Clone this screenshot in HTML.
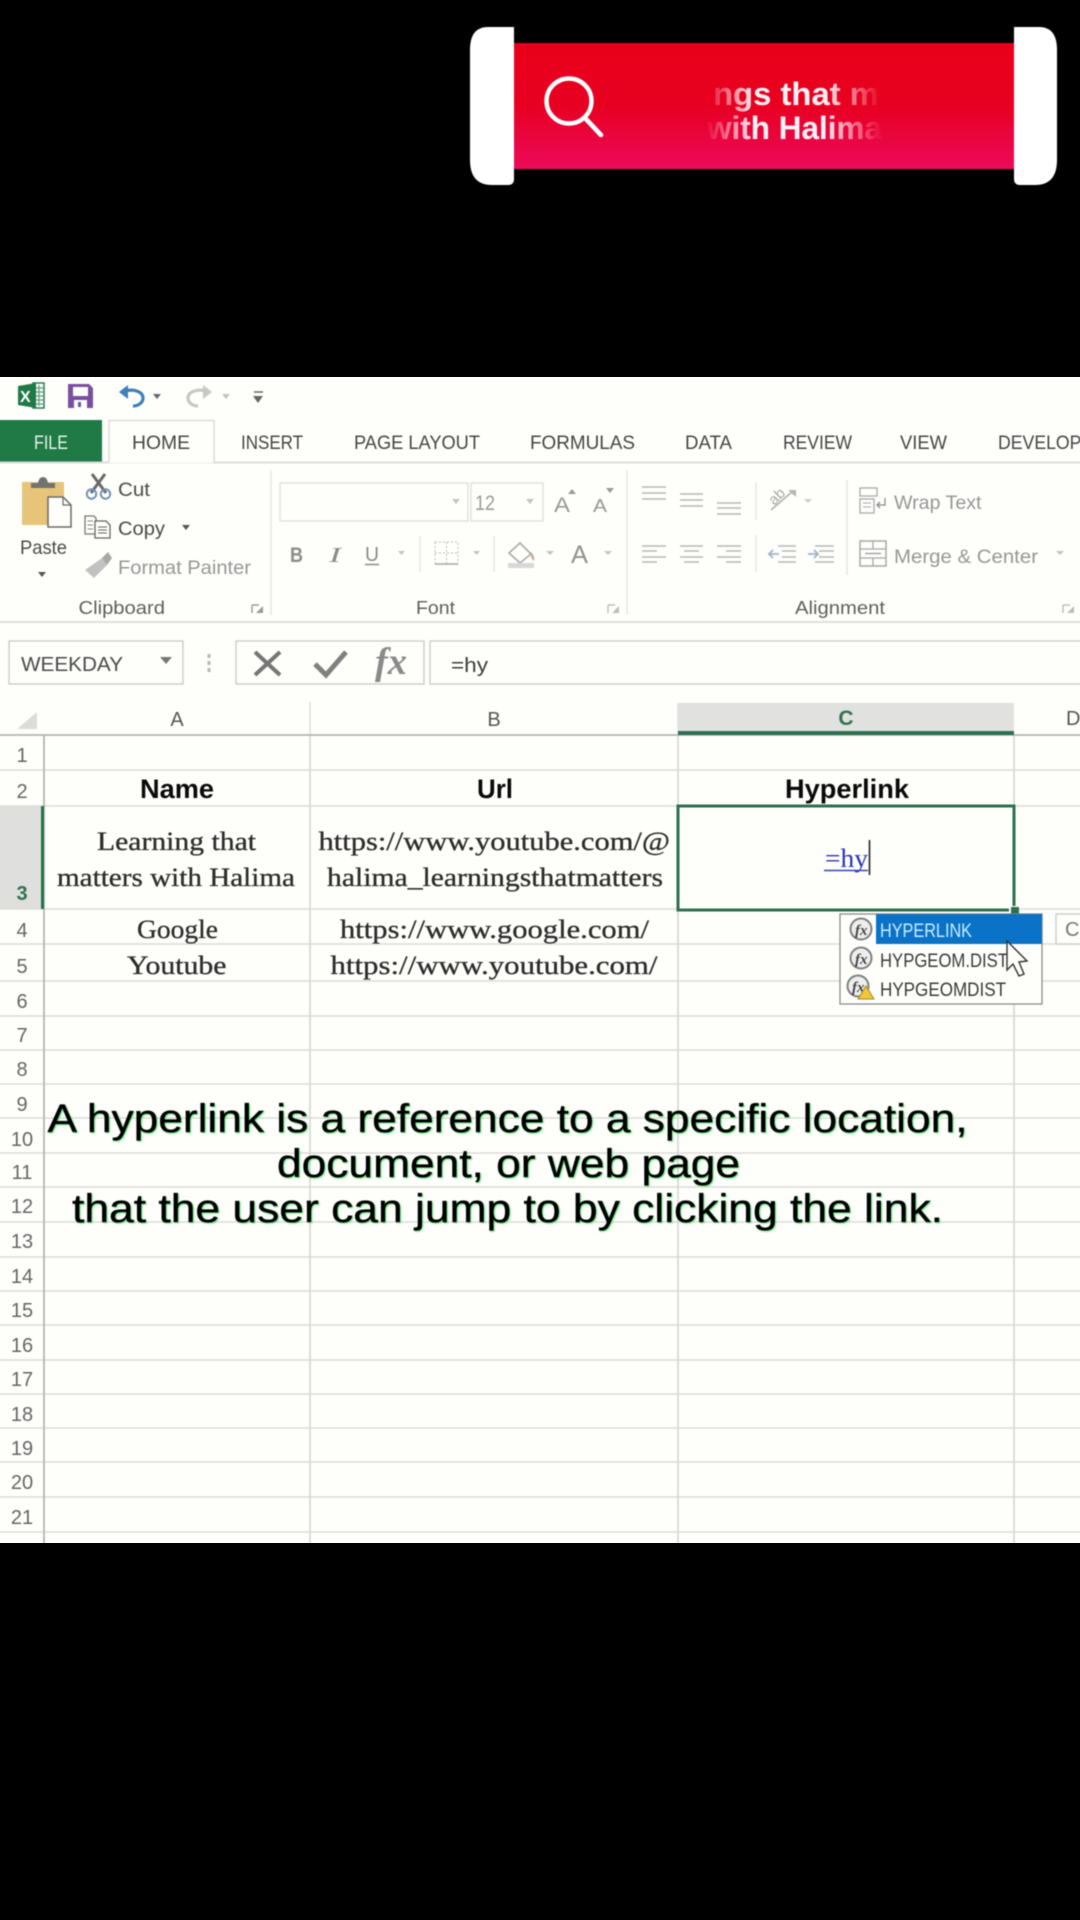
<!DOCTYPE html>
<html lang="en">
<head>
<meta charset="utf-8">
<title>Excel hyperlink</title>
<style>
html,body{margin:0;padding:0;background:#000;width:1080px;height:1920px;overflow:hidden}
svg{display:block;position:absolute;left:0;top:0}
text{font-family:"Liberation Sans",sans-serif}
.blur{filter:blur(.55px)}
.tab{font-size:19.5px;fill:#454545}
.rib{font-size:19.5px;fill:#4a4a4a}
.dim{font-size:19.5px;fill:#979797}
.grp{font-size:18px;fill:#5f5f5f}
.rn{font-size:20px;fill:#666;text-anchor:middle}
.hd{font-size:20px;fill:#555;text-anchor:middle}
.bd{font-size:27px;font-weight:bold;fill:#0a0a0a}
.sf{font-family:"Liberation Serif",serif;font-size:26px;fill:#2c2c2c;stroke:#2c2c2c;stroke-width:.3px}
.pop{font-size:19px;fill:#3a3a3a}
.sub{font-size:40px;fill:#000;stroke:#000;stroke-width:.35px;filter:drop-shadow(1.5px 1.5px .7px #52e56f)}
</style>
</head>
<body>
<svg width="1080" height="1920" viewBox="0 0 1080 1920" xmlns="http://www.w3.org/2000/svg">
<defs>
<linearGradient id="red" x1="0" y1="0" x2="0" y2="1">
<stop offset="0" stop-color="#e8001a"/><stop offset=".5" stop-color="#e80022"/><stop offset="1" stop-color="#ec0a5c"/>
</linearGradient>
<linearGradient id="fade" gradientUnits="userSpaceOnUse" x1="706" y1="0" x2="882" y2="0">
<stop offset="0" stop-color="#fff" stop-opacity="0"/>
<stop offset=".27" stop-color="#fff" stop-opacity=".95"/>
<stop offset=".68" stop-color="#fff" stop-opacity=".95"/>
<stop offset=".98" stop-color="#fff" stop-opacity=".05"/>
</linearGradient>
<clipPath id="r"><rect x="0" y="377" width="1080" height="1166"/></clipPath>
</defs>

<!-- Banner -->
<g class="blur">
<rect x="514" y="43" width="500" height="126" fill="url(#red)"/>
<path d="M514 27H488Q470 27 470 50V160Q470 185 492 185H508Q514 185 514 179Z" fill="#fff"/>
<path d="M1014 27H1039Q1057 27 1057 50V160Q1057 185 1035 185H1020Q1014 185 1014 179Z" fill="#fff"/>
<circle cx="569" cy="101" r="22.500" fill="none" stroke="#fff" stroke-width="4.400"/>
<path d="M585 118L601 135" stroke="#fff" stroke-width="4.600" stroke-linecap="round"/>
<text x="713" y="105" font-size="32" font-weight="bold" fill="url(#fade)" textLength="166" lengthAdjust="spacingAndGlyphs">ngs that m</text>
<text x="707" y="139" font-size="32" font-weight="bold" fill="url(#fade)" textLength="175" lengthAdjust="spacingAndGlyphs">with Halima</text>
</g>

<g clip-path="url(#r)"><g class="blur">
<rect x="-20" y="360" width="1120" height="1200" fill="#fefefb"/>

<!-- Quick access -->
<path d="M33 383H44V408H33Z" fill="#fff" stroke="#2a7a4e" stroke-width="1.5"/>
<path d="M35 388H43M35 392H43M35 396H43M35 400H43M35 404H43M39 385V406" stroke="#6fa88a" stroke-width="1.4"/>
<path d="M18 386L36 383V408L18 405Z" fill="#1f7a48"/>
<text x="20" y="402" font-size="16" font-weight="bold" fill="#fff">X</text>
<path d="M68 384H89L93 388V408H68Z" fill="#7a4f9f"/>
<rect x="73" y="387" width="15" height="9" fill="#fefefb"/>
<rect x="74" y="400" width="13" height="8" fill="#fefefb"/>
<rect x="78" y="402" width="3" height="5" fill="#7a4f9f"/>
<path d="M123 392C132 388 143 391 143 398C143 403 138 406 133 406" fill="none" stroke="#3d7fb8" stroke-width="3.2"/>
<path d="M119 392L128 385V399Z" fill="#3d7fb8"/>
<path d="M208 392C199 388 188 391 188 398C188 403 193 406 198 406" fill="none" stroke="#c8c8c8" stroke-width="3.2"/>
<path d="M212 392L203 385V399Z" fill="#c8c8c8"/>
<path d="M153 394H161L157 399Z" fill="#666"/>
<path d="M222 394H230L226 399Z" fill="#c4c4c4"/>
<path d="M254 392H263" stroke="#666" stroke-width="1.5"/><path d="M253 396H263L258 403Z" fill="#666"/>

<!-- Tabs -->
<rect x="-20" y="420" width="122" height="43" fill="#1f7a45"/>
<path d="M-20 462.500H1100" stroke="#dcdcda" stroke-width="2"/>
<path d="M109 463V420.500H214V463" fill="#fefefb" stroke="#dcdcda" stroke-width="1.5"/>
<text x="34" y="449" font-size="19.5" fill="#e8f4ec" textLength="34" lengthAdjust="spacingAndGlyphs">FILE</text>
<text x="132" y="449" class="tab" textLength="58" lengthAdjust="spacingAndGlyphs">HOME</text>
<text x="241" y="449" class="tab" textLength="62" lengthAdjust="spacingAndGlyphs">INSERT</text>
<text x="354" y="449" class="tab" textLength="126" lengthAdjust="spacingAndGlyphs">PAGE LAYOUT</text>
<text x="530" y="449" class="tab" textLength="105" lengthAdjust="spacingAndGlyphs">FORMULAS</text>
<text x="685" y="449" class="tab" textLength="47" lengthAdjust="spacingAndGlyphs">DATA</text>
<text x="783" y="449" class="tab" textLength="69" lengthAdjust="spacingAndGlyphs">REVIEW</text>
<text x="900" y="449" class="tab" textLength="47" lengthAdjust="spacingAndGlyphs">VIEW</text>
<text x="998" y="449" class="tab" textLength="108" lengthAdjust="spacingAndGlyphs">DEVELOPER</text>

<!-- Clipboard group -->
<rect x="22" y="482" width="42" height="43" rx="1" fill="#e6c478"/>
<path d="M31 488V483H38Q39 477 43 477Q47 477 48 483H55V488Z" fill="#727272"/>
<path d="M48 497H63L71 505V527H48Z" fill="#fefefb" stroke="#6a6a6a" stroke-width="1.5"/>
<path d="M63 497V505H71" fill="none" stroke="#6a6a6a" stroke-width="1.2"/>
<text x="20" y="554" class="rib" textLength="47" lengthAdjust="spacingAndGlyphs">Paste</text>
<path d="M38 572H46L42 577Z" fill="#555"/>
<path d="M92 474L106 493M105 474L91 493" stroke="#6a6a6a" stroke-width="3"/>
<circle cx="91.500" cy="494" r="4.700" fill="none" stroke="#6f93b5" stroke-width="2"/>
<circle cx="105.500" cy="494" r="4.700" fill="none" stroke="#6f93b5" stroke-width="2"/>
<text x="118" y="496" class="rib" textLength="32" lengthAdjust="spacingAndGlyphs">Cut</text>
<path d="M85 516H94L96 518V534H85Z" fill="#fefefb" stroke="#777" stroke-width="1.3"/>
<path d="M87.500 521H93M87.500 525H93M87.500 529H93" stroke="#888"/>
<path d="M95 521H106L110 525V538H95Z" fill="#fefefb" stroke="#666" stroke-width="1.3"/>
<path d="M98 527H107M98 530H107M98 533H107" stroke="#666"/>
<text x="118" y="535" class="rib" textLength="47" lengthAdjust="spacingAndGlyphs">Copy</text>
<path d="M182 525H190L186 530Z" fill="#555"/>
<path d="M85 570L102 558L107 565L94 578Z" fill="#c2c2c2"/>
<path d="M102 558L108 552L112 558L107 565Z" fill="#a8a8a8"/>
<text x="118" y="574" class="dim" textLength="133" lengthAdjust="spacingAndGlyphs">Format Painter</text>
<text x="78.500" y="614" class="grp" textLength="86.500" lengthAdjust="spacingAndGlyphs">Clipboard</text>
<path d="M252 605H259M252 605V613" stroke="#999" fill="none" stroke-width="1.4"/><path d="M256 613H263V606Z" fill="#999"/>

<!-- Separators -->
<path d="M271 470V615M627 470V615M847 480V575M756 482V520M756 535V572M420 536V572M494 536V572" stroke="#e6e6e4" stroke-width="1.5"/>
<path d="M-20 622H1100" stroke="#dededc" stroke-width="2"/>

<!-- Font group -->
<rect x="280" y="483" width="188" height="38" fill="none" stroke="#e2e2e0" stroke-width="1.5"/>
<rect x="471" y="483" width="72" height="38" fill="none" stroke="#e2e2e0" stroke-width="1.5"/>
<path d="M452 499H460L456 504Z" fill="#c4c4c4"/><path d="M526 499H534L530 504Z" fill="#c4c4c4"/>
<text x="475" y="510" font-size="21" fill="#9b9b9b" textLength="20" lengthAdjust="spacingAndGlyphs">12</text>
<text x="554" y="512" font-size="21" fill="#999" textLength="16" lengthAdjust="spacingAndGlyphs">A</text>
<path d="M568 494H576L572 489Z" fill="#999"/>
<text x="593" y="512" font-size="18" fill="#999" textLength="14" lengthAdjust="spacingAndGlyphs">A</text>
<path d="M606 488H614L610 493Z" fill="#999"/>
<text x="290" y="562" font-size="21" font-weight="bold" fill="#8b8b8b" textLength="13" lengthAdjust="spacingAndGlyphs">B</text>
<text x="329" y="562" font-size="21" font-style="italic" style="font-family:'Liberation Serif',serif" fill="#8b8b8b" textLength="12" lengthAdjust="spacingAndGlyphs">I</text>
<text x="365" y="561" font-size="20" fill="#8b8b8b" textLength="14" lengthAdjust="spacingAndGlyphs">U</text>
<path d="M365 564.500H379" stroke="#8b8b8b" stroke-width="1.5"/>
<path d="M398 551H405L401.500 555Z" fill="#c4c4c4"/>
<rect x="435" y="542" width="23" height="22" fill="none" stroke="#bdbdbd" stroke-dasharray="2 2"/>
<path d="M446.500 542V564M435 553H458" stroke="#bdbdbd" stroke-dasharray="2 2"/>
<path d="M435 564H458" stroke="#a8a8a8" stroke-width="1.5"/>
<path d="M473 551H480L476.500 555Z" fill="#c4c4c4"/>
<path d="M509 553L520 543L531 554L520 563Z" fill="#fefefb" stroke="#aaa" stroke-width="1.6"/>
<path d="M531 552Q535 556 534 561Q530 558 531 552Z" fill="#d0a88a"/>
<rect x="508" y="563" width="26" height="5" fill="#d9d9d9"/>
<path d="M546 551H554L550 555Z" fill="#c4c4c4"/>
<text x="571" y="563" font-size="25" fill="#919191" textLength="17" lengthAdjust="spacingAndGlyphs">A</text>
<path d="M604 551H612L608 555Z" fill="#c4c4c4"/>
<text x="416" y="614" class="grp" textLength="39" lengthAdjust="spacingAndGlyphs">Font</text>
<path d="M608 605H615M608 605V613" stroke="#bdbdbd" fill="none" stroke-width="1.4"/><path d="M612 613H619V606Z" fill="#bdbdbd"/>

<!-- Alignment group -->
<g stroke="#b8b8b8" stroke-width="1.6">
<path d="M642 487H666M642 493H666M642 499H666"/>
<path d="M680 494H703M680 500H703M680 506H703"/>
<path d="M717 503H741M717 508H741M717 514H741"/>
<path d="M642 546H666M642 551H657M642 557H666M642 562H657"/>
<path d="M680 546H703M684 551H699M680 557H703M684 562H699"/>
<path d="M717 546H741M726 551H741M717 557H741M726 562H741"/>
<path d="M778 546H796M782 551H796M782 557H796M778 562H796"/>
<path d="M815 546H834M819 551H834M819 557H834M815 562H834"/>
</g>
<path d="M769 554H779M773 550L769 554L773 558" fill="none" stroke="#9fb5ca" stroke-width="1.8"/>
<path d="M808 554H818M814 550L818 554L814 558" fill="none" stroke="#9fb5ca" stroke-width="1.8"/>
<path d="M771 510L793 491" stroke="#b5b5b5" stroke-width="1.8"/>
<path d="M788 490H796V497Z" fill="#b5b5b5"/>
<text x="769" y="503" font-size="15" fill="#a8a8a8" transform="rotate(-45 775 498)">ab</text>
<path d="M804 499H812L808 503Z" fill="#ccc"/>
<rect x="860" y="488" width="17" height="8" fill="none" stroke="#aaa" stroke-width="1.3"/>
<rect x="860" y="499" width="14" height="14" fill="none" stroke="#aaa" stroke-width="1.3"/>
<path d="M863 503H871M863 507H871" stroke="#aaa"/>
<path d="M885 498V505H877M880 502L877 505L880 508" fill="none" stroke="#8c8c8c" stroke-width="1.3"/>
<text x="894" y="509" class="dim" textLength="87.500" lengthAdjust="spacingAndGlyphs">Wrap Text</text>
<rect x="860" y="541" width="26" height="25" fill="none" stroke="#a8a8a8" stroke-width="1.5"/>
<path d="M860 549H886M860 558H886M873 541V549M873 558V566" stroke="#a8a8a8" stroke-width="1.3"/>
<path d="M865 553.500H881" stroke="#9a9a9a" stroke-width="1.3"/>
<text x="894" y="563" class="dim" textLength="144" lengthAdjust="spacingAndGlyphs">Merge &amp; Center</text>
<path d="M1056 551H1064L1060 555Z" fill="#c4c4c4"/>
<text x="795" y="614" class="grp" textLength="90" lengthAdjust="spacingAndGlyphs">Alignment</text>
<path d="M1063 605H1070M1063 605V613" stroke="#bdbdbd" fill="none" stroke-width="1.4"/><path d="M1067 613H1074V606Z" fill="#bdbdbd"/>

<!-- Formula bar -->
<rect x="9" y="641" width="174" height="43" fill="none" stroke="#cfcfcd" stroke-width="1.5"/>
<text x="21" y="671" font-size="20.500" fill="#4a4a4a" textLength="102" lengthAdjust="spacingAndGlyphs">WEEKDAY</text>
<path d="M160 657H172L166 664Z" fill="#777"/>
<path d="M209 654V658M209 661V665M209 668V672" stroke="#b8b8b8" stroke-width="3"/>
<rect x="236" y="641" width="188" height="43" fill="none" stroke="#cfcfcd" stroke-width="1.5"/>
<rect x="430" y="641" width="680" height="43" fill="none" stroke="#cfcfcd" stroke-width="1.5"/>
<path d="M255 652L280 675M280 652L255 675" stroke="#767676" stroke-width="4"/>
<path d="M315 664L326 675L346 652" fill="none" stroke="#808080" stroke-width="5"/>
<text x="375" y="674" font-size="38" font-style="italic" font-weight="bold" style="font-family:'Liberation Serif',serif" fill="#8a8a8a" textLength="32" lengthAdjust="spacingAndGlyphs">fx</text>
<text x="451" y="672" font-size="20.500" fill="#3c3c3c" textLength="37" lengthAdjust="spacingAndGlyphs">=hy</text>

<!-- Grid -->
<path d="M678 703H1014V733H678Z" fill="#e1e1df"/>
<path d="M17 729L37 712V729Z" fill="#dcdcda"/>
<rect x="-20" y="806" width="61" height="103" fill="#dfdfdd"/>
<path d="M-20 770H1100M-20 806H1100M-20 909H1100M-20 944H1100M-20 981H1100M-20 1016H1100M-20 1050H1100M-20 1084H1100M-20 1118H1100M-20 1153H1100M-20 1187H1100M-20 1222H1100M-20 1257H1100M-20 1291H1100M-20 1325H1100M-20 1360H1100M-20 1394H1100M-20 1428H1100M-20 1462H1100M-20 1497H1100M-20 1532H1100" stroke="#dbdbd8" stroke-width="1.6"/>
<path d="M310 735V1560M678 735V1560M1014 735V1560" stroke="#d5d5d3" stroke-width="1.6"/>
<path d="M310 702V735M678 703V733" stroke="#e0e0de" stroke-width="1.6"/>
<path d="M44 735V1560" stroke="#b5b5b3" stroke-width="1.8"/>
<path d="M-20 735H1100" stroke="#a9a9a7" stroke-width="1.6"/>
<rect x="678" y="731" width="336" height="4" fill="#2b7050"/>
<rect x="41" y="806" width="3" height="103" fill="#217346"/>

<text x="177" y="726" class="hd">A</text>
<text x="494" y="726" class="hd">B</text>
<text x="846" y="725" class="hd" style="fill:#2f7350;font-weight:bold;font-size:21px">C</text>
<text x="1066" y="725" font-size="20" fill="#555">D</text>

<text x="22" y="762" class="rn">1</text>
<text x="22" y="798" class="rn">2</text>
<text x="22" y="900" class="rn" style="fill:#2f7350;font-weight:bold">3</text>
<text x="22" y="937" class="rn">4</text>
<text x="22" y="973" class="rn">5</text>
<text x="22" y="1008" class="rn">6</text>
<text x="22" y="1042" class="rn">7</text>
<text x="22" y="1076" class="rn">8</text>
<text x="22" y="1111" class="rn">9</text>
<text x="22" y="1146" class="rn">10</text>
<text x="22" y="1179" class="rn">11</text>
<text x="22" y="1213" class="rn">12</text>
<text x="22" y="1248" class="rn">13</text>
<text x="22" y="1283" class="rn">14</text>
<text x="22" y="1317" class="rn">15</text>
<text x="22" y="1352" class="rn">16</text>
<text x="22" y="1386" class="rn">17</text>
<text x="22" y="1421" class="rn">18</text>
<text x="22" y="1455" class="rn">19</text>
<text x="22" y="1489" class="rn">20</text>
<text x="22" y="1524" class="rn">21</text>

<text x="140" y="798" class="bd" textLength="74" lengthAdjust="spacingAndGlyphs">Name</text>
<text x="477" y="798" class="bd" textLength="36" lengthAdjust="spacingAndGlyphs">Url</text>
<text x="785" y="798" class="bd" textLength="124" lengthAdjust="spacingAndGlyphs">Hyperlink</text>

<text x="97" y="850" class="sf" textLength="159" lengthAdjust="spacingAndGlyphs">Learning that</text>
<text x="57" y="886" class="sf" textLength="238" lengthAdjust="spacingAndGlyphs">matters with Halima</text>
<text x="318.500" y="850" class="sf" textLength="351.500" lengthAdjust="spacingAndGlyphs">https://www.youtube.com/@</text>
<text x="327" y="886" class="sf" textLength="336" lengthAdjust="spacingAndGlyphs">halima_learningsthatmatters</text>
<text x="137" y="938" class="sf" textLength="81" lengthAdjust="spacingAndGlyphs">Google</text>
<text x="340" y="938" class="sf" textLength="309" lengthAdjust="spacingAndGlyphs">https://www.google.com/</text>
<text x="127" y="974" class="sf" textLength="99.500" lengthAdjust="spacingAndGlyphs">Youtube</text>
<text x="330.500" y="974" class="sf" textLength="327" lengthAdjust="spacingAndGlyphs">https://www.youtube.com/</text>

<!-- Selected cell -->
<rect x="678" y="806" width="336" height="104" fill="#fefefb" stroke="#2f6f4e" stroke-width="3"/>
<rect x="1009" y="906" width="10" height="9" fill="#fefefb"/>
<rect x="1011" y="907" width="8" height="7" fill="#2f6f4e"/>
<text x="825" y="867" font-size="26" fill="#2a35b5" style="font-family:'Liberation Serif',serif" textLength="43" lengthAdjust="spacingAndGlyphs">=hy</text>
<path d="M824 870.500H868" stroke="#2a4db5" stroke-width="1.5"/>
<path d="M869.500 840V875" stroke="#222" stroke-width="1.6"/>

<!-- Autocomplete -->
<rect x="840" y="914" width="202" height="90" fill="#fefefb" stroke="#8c8c8c" stroke-width="1.3"/>
<rect x="876" y="914" width="166" height="30" fill="#0b73c7"/>
<g fill="#eee" stroke="#808080" stroke-width="2">
<circle cx="861" cy="929" r="10.500"/><circle cx="861" cy="958" r="10.500"/><circle cx="858" cy="986" r="10.500"/>
</g>
<text x="855" y="935" font-size="15" font-style="italic" fill="#444" style="font-family:'Liberation Serif',serif;font-weight:bold">fx</text>
<text x="855" y="964" font-size="15" font-style="italic" fill="#444" style="font-family:'Liberation Serif',serif;font-weight:bold">fx</text>
<text x="852" y="992" font-size="15" font-style="italic" fill="#444" style="font-family:'Liberation Serif',serif;font-weight:bold">fx</text>
<path d="M866 986L874 999H858Z" fill="#f0c63c" stroke="#a98a1c"/>
<text x="880" y="937" class="pop" style="fill:#c9ecff" textLength="92" lengthAdjust="spacingAndGlyphs">HYPERLINK</text>
<text x="880" y="967" class="pop" textLength="128" lengthAdjust="spacingAndGlyphs">HYPGEOM.DIST</text>
<text x="880" y="996" class="pop" textLength="126" lengthAdjust="spacingAndGlyphs">HYPGEOMDIST</text>
<rect x="1056" y="914" width="40" height="30" fill="#fefefb" stroke="#d0d0ce" stroke-width="1.5"/>
<text x="1065" y="936" font-size="20" fill="#777">C</text>
<path d="M1007 941V970L1013 964L1019 976L1024 974L1019 962L1027 961Z" fill="#fefefb" stroke="#333" stroke-width="1.4"/>

<!-- Subtitles -->
<text x="47.500" y="1132" class="sub" textLength="920" lengthAdjust="spacingAndGlyphs">A hyperlink is a reference to a specific location,</text>
<text x="277" y="1177" class="sub" textLength="463" lengthAdjust="spacingAndGlyphs">document, or web page</text>
<text x="72" y="1222" class="sub" textLength="871" lengthAdjust="spacingAndGlyphs">that the user can jump to by clicking the link.</text>
</g></g>
</svg>
</body>
</html>
